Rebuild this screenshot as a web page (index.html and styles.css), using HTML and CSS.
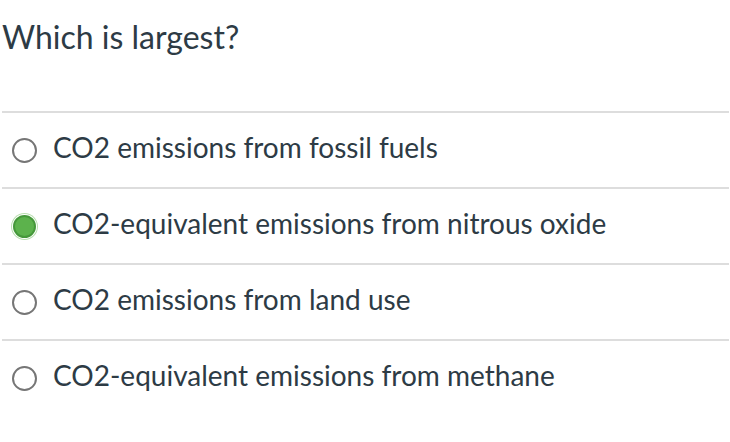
FILE: index.html
```html
<!DOCTYPE html>
<html>
<head>
<meta charset="utf-8">
<link rel="stylesheet" href="styles.css">
</head>
<body>
<div class="quiz">
  <h1 class="question">Which is largest?</h1>
  <ul class="answers">
    <li class="answer"><span class="radio"></span><span class="label">CO2 emissions from fossil fuels</span></li>
    <li class="answer"><span class="radio selected"></span><span class="label">CO2-equivalent emissions from nitrous oxide</span></li>
    <li class="answer"><span class="radio"></span><span class="label">CO2 emissions from land use</span></li>
    <li class="answer"><span class="radio"></span><span class="label">CO2-equivalent emissions from methane</span></li>
  </ul>
</div>
</body>
</html>
```

FILE: styles.css
```css
html, body {
  margin: 0;
  padding: 0;
  background: #fff;
}
body {
  font-family: Lato, "Open Sans", sans-serif;
  color: #2d3b45;
}
.quiz {
  padding: 0 1px 0 2px;
}
.question {
  margin: 0;
  padding-top: 18px;
  font-size: 32px;
  font-weight: 400;
  line-height: 38px;
  height: 93px;
}
.answers {
  list-style: none;
  margin: 0;
  padding: 0;
}
.answer {
  display: flex;
  align-items: center;
  height: 74px;
  border-top: 2px solid #dddddd;
  padding-left: 10px;
}
.radio {
  flex: none;
  box-sizing: border-box;
  width: 25px;
  height: 25px;
  border: 2px solid #767676;
  border-radius: 50%;
  margin-right: 16px;
}
.radio.selected {
  background: #5cb24c;
  border: 2px solid #45983a;
  box-shadow: 0 0 0 1px #fff, 0 0 0 2px #b9dfb0;
  width: 23px;
  height: 23px;
  margin-left: 1px;
  margin-right: 17px;
}
.label {
  font-size: 28px;
  line-height: 32px;
  margin-top: -6px;
}
```
